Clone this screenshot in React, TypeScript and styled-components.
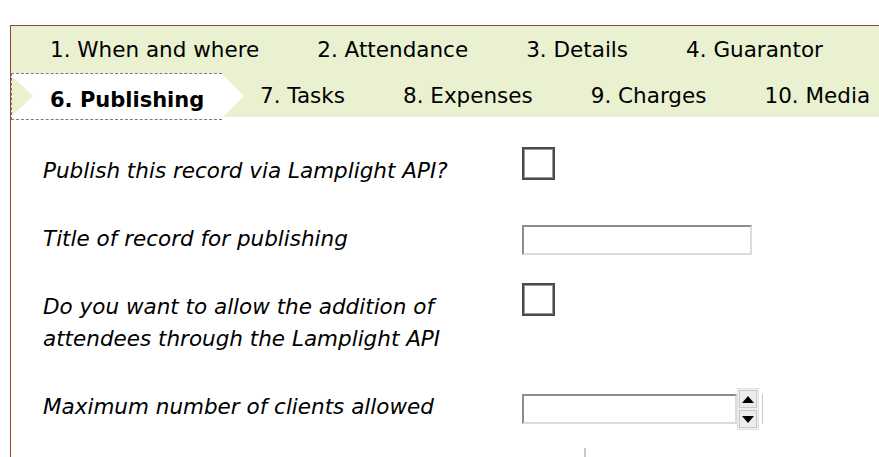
import React from "react";
import styled, { createGlobalStyle } from "styled-components";

const Global = createGlobalStyle`
  html, body { margin: 0; padding: 0; background: #fff; }
  body { font-family: "DejaVu Sans", Verdana, sans-serif; color: #000; overflow: hidden; }
`;

const Page = styled.div`
  padding: 25px 0 0 10px;
  height: 457px;
  box-sizing: border-box;
`;

const Frame = styled.div`
  border-top: 1px solid #8a4a2c;
  border-left: 1px solid #8a4a2c;
  height: 100%;
  box-sizing: border-box;
  overflow: hidden;
`;

const TabBar = styled.div`
  background: #e9f1d1;
  height: 91px;
  display: flex;
  flex-direction: column;
`;

const TabRow = styled.div<{ $first?: boolean }>`
  display: flex;
  align-items: center;
  height: ${(p) => (p.$first ? "47px" : "44px")};
  padding-left: ${(p) => (p.$first ? "10px" : "0")};
  white-space: nowrap;
`;

const Tab = styled.div<{ $drop?: number }>`
  flex-shrink: 0;
  font-size: 21.5px;
  padding: ${(p) => p.$drop ?? 0}px 29px 0;
  line-height: 24px;
`;

const ActiveTab = styled.div`
  position: relative;
  flex-shrink: 0;
  align-self: flex-start;
  height: 47px;
  width: 211px;
  margin-right: 9px;
  box-sizing: border-box;
  background: #fff;
  border-top: 1px dashed #7a7a7a;
  border-bottom: 1px dashed #7a7a7a;
  border-left: 1px dashed #7a7a7a;
  display: flex;
  align-items: center;
  padding: 6px 0 0 38px;
  font-size: 21px;
  font-weight: bold;

  &::before {
    content: "";
    position: absolute;
    left: 0;
    top: 2px;
    border-left: 21px solid #e9f1d1;
    border-top: 20px solid transparent;
    border-bottom: 20px solid transparent;
  }
  &::after {
    content: "";
    position: absolute;
    left: 100%;
    top: 0px;
    border-left: 22px solid #fff;
    border-top: 22px solid transparent;
    border-bottom: 22px solid transparent;
  }
`;

const Content = styled.div`
  padding: 30px 0 0 32px;
  display: flex;
  flex-direction: column;
  gap: 28px;
`;

const Row = styled.div`
  display: grid;
  grid-template-columns: 479px auto;
  align-items: start;
`;

const Label = styled.div`
  font-size: 21.5px;
  font-style: italic;
  line-height: 32px;
  padding-top: 8px;
  max-width: 450px;
`;

const Checkbox = styled.div`
  width: 33px;
  height: 33px;
  box-sizing: border-box;
  border: 2px solid #4a4a4a;
  box-shadow: inset 0 0 0 1px #9a9a9a;
  background: #fff;
`;

const TextInput = styled.div<{ $w: number; $top: number }>`
  width: ${(p) => p.$w}px;
  height: 30px;
  margin-top: ${(p) => p.$top}px;
  box-sizing: border-box;
  border-top: 2px solid #8c8c8c;
  border-left: 2px solid #8c8c8c;
  border-bottom: 2px solid #dcdcdc;
  border-right: 2px solid #dcdcdc;
  background: #fff;
`;

const NumberWrap = styled.div`
  display: flex;
  align-items: center;
  margin-top: 5px;
`;

const Spinner = styled.div`
  display: flex;
  flex-direction: column;
  width: 22px;
  height: 42px;
  box-sizing: border-box;
  border: 1px solid #e2e2e2;
  background: #f0f0f0;
`;

const SpinBtn = styled.div`
  flex: 1;
  display: flex;
  align-items: center;
  justify-content: center;
  border: 1px solid #c8c8c8;
  margin: 1px;
  background: #ececec;
`;

const Tick = styled.div`
  width: 1px;
  height: 30px;
  background: #c8c8c8;
  margin-left: 3px;
`;

const Stub = styled.div`
  width: 2px;
  height: 10px;
  background: #c8c8c8;
  margin: -10px 0 0 62px;
`;

const Arrow = ({ up }: { up?: boolean }) => (
  <svg width="14" height="9" viewBox="0 0 14 9">
    <path d={up ? "M1 8 L7 1 L13 8 Z" : "M1 1 L7 8 L13 1 Z"} fill="#000" />
  </svg>
);

export default function App() {
  return (
    <>
      <Global />
      <Page>
        <Frame>
          <TabBar>
            <TabRow $first>
              <Tab>1. When and where</Tab>
              <Tab>2. Attendance</Tab>
              <Tab>3. Details</Tab>
              <Tab>4. Guarantor</Tab>
            </TabRow>
            <TabRow>
              <ActiveTab>6. Publishing</ActiveTab>
              <Tab $drop={2}>7. Tasks</Tab>
              <Tab $drop={2}>8. Expenses</Tab>
              <Tab $drop={2}>9. Charges</Tab>
              <Tab $drop={2}>10. Media</Tab>
            </TabRow>
          </TabBar>
          <Content>
            <Row>
              <Label>Publish this record via Lamplight API?</Label>
              <Checkbox />
            </Row>
            <Row>
              <Label>Title of record for publishing</Label>
              <TextInput $w={230} $top={10} />
            </Row>
            <Row>
              <Label>Do you want to allow the addition of attendees through the Lamplight API</Label>
              <Checkbox />
            </Row>
            <Row>
              <Label>Maximum number of clients allowed</Label>
              <NumberWrap>
                <TextInput $w={215} $top={0} />
                <Spinner>
                  <SpinBtn><Arrow up /></SpinBtn>
                  <SpinBtn><Arrow /></SpinBtn>
                </Spinner>
                <Tick />
              </NumberWrap>
            </Row>
            <Row>
              <div />
              <Stub />
            </Row>
          </Content>
        </Frame>
      </Page>
    </>
  );
}
